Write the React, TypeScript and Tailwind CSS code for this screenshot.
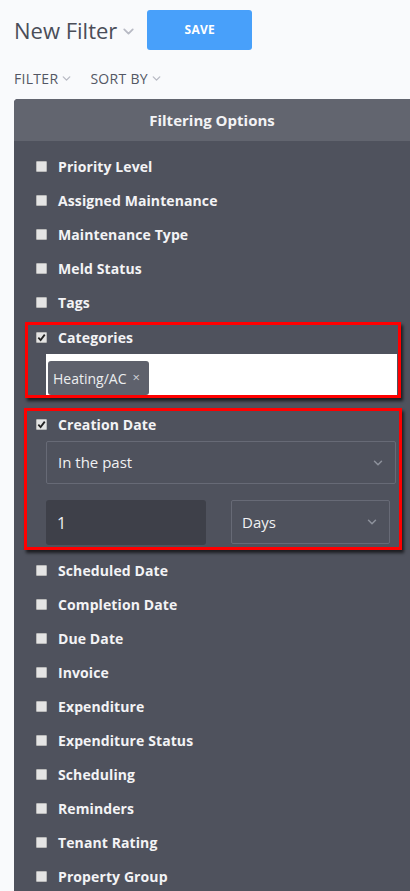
import { ChevronDown } from "lucide-react";

const topRows = ["Priority Level", "Assigned Maintenance", "Maintenance Type", "Meld Status", "Tags"];
const bottomRows = [
  "Scheduled Date",
  "Completion Date",
  "Due Date",
  "Invoice",
  "Expenditure",
  "Expenditure Status",
  "Scheduling",
  "Reminders",
  "Tenant Rating",
  "Property Group",
];

function Check({ checked }: { checked?: boolean }) {
  return (
    <span className="w-[11px] h-[11px] shrink-0 rounded-[1px] border border-[#b9b9b9] bg-[#e4e4e4] flex items-center justify-center">
      {checked && (
        <svg width="9" height="9" viewBox="0 0 10 10">
          <path d="M1.5 5.2 L4 7.8 L8.6 1.8" fill="none" stroke="#222" strokeWidth="2" />
        </svg>
      )}
    </span>
  );
}

function Row({ label }: { label: string }) {
  return (
    <div className="h-[34px] flex items-center pl-[22px] gap-[11px]">
      <Check />
      <span className="text-[14px] font-bold text-[#f3f3f5] tracking-[0.1px]">{label}</span>
    </div>
  );
}

export default function App() {
  return (
    <div
      className="w-full h-[891px] overflow-hidden bg-[#f9fafc]"
      style={{ fontFamily: '"Open Sans", "Noto Sans", sans-serif' }}
    >
      <div className="flex items-center pl-[14px] pt-[10px]">
        <span className="text-[22px] leading-[40px] text-[#4a4d58]">New Filter</span>
        <ChevronDown className="w-[17px] h-[17px] text-[#b8bac4] ml-[3px] mt-[2px]" strokeWidth={2.5} />
        <button className="ml-[10px] w-[105px] h-[40px] rounded-[3px] bg-[#48a0fa] text-white text-[12px] font-bold tracking-[0.3px]">
          SAVE
        </button>
      </div>

      <div className="flex items-center pl-[14px] mt-[19px] h-[18px] text-[14px] tracking-[0.3px] text-[#535764]">
        <span>FILTER</span>
        <ChevronDown className="w-[13px] h-[13px] text-[#b8bac4] ml-[2px]" strokeWidth={2.5} />
        <span className="ml-[17px]">SORT BY</span>
        <ChevronDown className="w-[13px] h-[13px] text-[#b8bac4] ml-[2px]" strokeWidth={2.5} />
      </div>

      <div className="ml-[14px] mt-[12px] rounded-tl-[4px] overflow-hidden bg-[#4f525d]">
        <div className="h-[42px] bg-[#62656f] flex items-center justify-center text-[15px] font-bold text-[#f3f3f5]">
          Filtering Options
        </div>

        <div className="pt-[8px]">
          {topRows.map((r) => (
            <Row key={r} label={r} />
          ))}

          <div className="ml-[11px] mt-[3px] w-[376px] h-[76px] border-[3px] border-[#ff0000] overflow-hidden shadow-[2px_3px_3px_rgba(0,0,0,0.65)]">
            <div className="h-[24px] flex items-center pl-[8px] gap-[11px]">
              <Check checked />
              <span className="text-[14px] font-bold text-[#f3f3f5] tracking-[0.1px]">Categories</span>
            </div>
            <div className="ml-[18px] mr-[1px] mt-[5px] h-[44px] bg-white pl-[2px] pt-[7px]">
              <div className="inline-flex items-center h-[34px] rounded-[3px] bg-[#5e616c] pl-[5px] pr-[9px] text-[14px] text-[#eceef0]">
                Heating/AC
                <span className="ml-[6px] text-[13px] text-[#d0d2d8]">×</span>
              </div>
            </div>
          </div>

          <div className="ml-[10px] mt-[10px] w-[378px] h-[142px] border-[3px] border-[#ff0000] overflow-hidden shadow-[2px_3px_3px_rgba(0,0,0,0.65)]">
            <div className="h-[26px] flex items-center pl-[9px] gap-[11px]">
              <Check checked />
              <span className="text-[14px] font-bold text-[#f3f3f5] tracking-[0.1px]">Creation Date</span>
            </div>
            <div className="ml-[19px] mr-[3px] mt-[4px] h-[43px] rounded-[2px] border border-[#676a76] flex items-center justify-between pl-[11px] pr-[10px]">
              <span className="text-[15px] text-[#f1f1f3]">In the past</span>
              <ChevronDown className="w-[14px] h-[14px] text-[#8e929c]" strokeWidth={2.5} />
            </div>
            <div className="flex ml-[19px] mt-[16px]">
              <div className="w-[160px] h-[45px] rounded-[3px] bg-[#3e4049] flex items-center pl-[11px] text-[16px] text-[#f1f1f3]">
                1
              </div>
              <div className="ml-[25px] w-[159px] h-[44px] rounded-[2px] border border-[#676a76] flex items-center justify-between pl-[10px] pr-[10px]">
                <span className="text-[15px] text-[#f1f1f3]">Days</span>
                <ChevronDown className="w-[14px] h-[14px] text-[#8e929c]" strokeWidth={2.5} />
              </div>
            </div>
          </div>

          <div className="mt-[3px]">
            {bottomRows.map((r) => (
              <Row key={r} label={r} />
            ))}
          </div>
        </div>
      </div>
    </div>
  );
}
